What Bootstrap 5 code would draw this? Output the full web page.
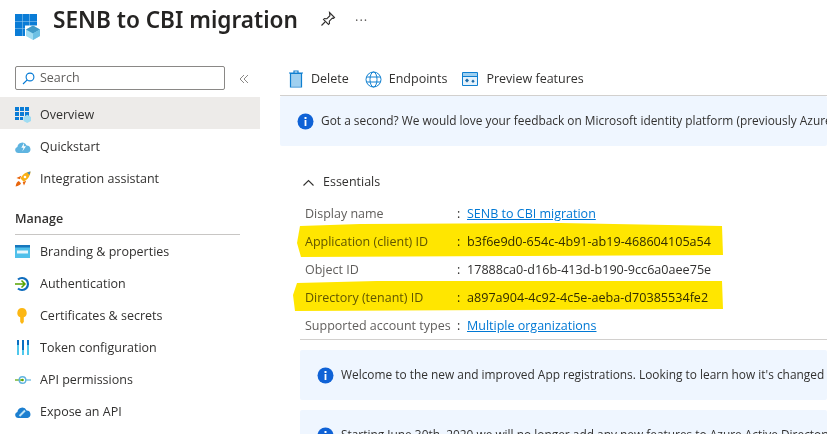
<!DOCTYPE html>
<html lang="en">
<head>
  <meta charset="UTF-8">
  <title>SENB to CBI migration</title>
  <link href="https://cdn.jsdelivr.net/npm/bootstrap@5.3.2/dist/css/bootstrap.min.css" rel="stylesheet">
  <style>
    html, body { height: 434px; overflow: hidden; }
    body { font-family: "Open Sans", "Noto Sans", sans-serif; font-size: 12.5px; color: #323130; background: #fff; }
    .page-head { height: 66px; padding-left: 15px; padding-top: 3px; }
    .page-title { font-family: "Noto Sans", sans-serif; font-size: 22.6px; font-weight: 600; color: #252423; margin: 0 0 0 13px; line-height: 34px; }
    .app-logo { margin-top: 11px; }
    .pin-btn { margin-left: 22px; }
    .more-dots { margin-left: 19px; font-size: 13px; line-height: 34px; color: #605e5c; letter-spacing: 1px; }
    .side-pane { width: 260px; flex: none; }
    .search-row { height: 31px; padding: 0 0 0 15px; }
    .search-box { width: 210px; height: 24px; border: 1px solid #8a8886; border-radius: 2px; color: #605e5c; padding-left: 6px; padding-top: 1px; gap: 5px; }
    .collapse-mark { margin-left: 14px; }
    .side-item { height: 32px; padding-left: 15px; gap: 9px; color: #323130; }
    .side-item.is-active { background: #edebe9; }
    .side-item svg { width: 16px; height: 16px; flex: none; }
    .side-top { padding-top: 4px; }
    .side-head { font-weight: 600; font-size: 12.5px; margin: 17px 20px 1px 15px; padding-bottom: 7px; border-bottom: 1px solid #c8c6c4; line-height: 17px; }
    .main-pane { margin-left: 20px; flex: 1; min-width: 0; overflow: hidden; }
    .tool-bar { height: 30px; border-bottom: 1px solid #d2d0ce; padding: 0 0 3px 8px; gap: 16px; }
    .tool-item { gap: 7px; }
    .tool-preview { margin-left: -1px; }
    .note-bar { height: 50px; background: #eff6ff; white-space: nowrap; gap: 7px; padding-left: 17px; overflow: hidden; border-radius: 2px; font-size: 11.9px; }
    .note-bar svg { flex: none; }
    .detail-wrap { margin-left: 20px; }
    .ess-head { margin: 26px 0 0 3px; height: 20px; gap: 9px; color: #323130; font-weight: 500; }
    .field-list { position: relative; margin-top: 8px; border-bottom: 1px solid #d2d0ce; height: 140px; padding-left: 5px; }
    .field-row { height: 28px; }
    .field-name { width: 152px; color: #605e5c; flex: none; }
    .field-colon { width: 6px; flex: none; margin-right: 4px; }
    .field-row a { color: #0078d4; }
    .field-guid { font-size: 12.6px; }
    .hi-mark { position: absolute; left: -8px; top: 0; width: 432px; height: 120px; mix-blend-mode: multiply; pointer-events: none; }
    .note-gap { margin-top: 10px; }
  </style>
</head>
<body>

<div class="page-head d-flex align-items-start">
  <svg class="app-logo" width="25" height="26" viewBox="0 0 25 26">
    <path fill="#a6d3f2" d="M0 0h22v22H0z"/>
    <path fill="#0a7cd6" d="M0 0h7v7H0zM7.500 0h7v7h-7zM15 0h7v7h-7zM0 7.500h7v7H0zM7.500 7.500h7v7h-7zM15 7.500h7v7h-7zM0 15h7v7H0zM7.500 15h7v7h-7z"/>
    <path fill="#fff" d="M10 11.500h15V26H10z"/>
    <path fill="#9fdcf2" d="M11 15.500l7-4 7 4v6.500l-7 4-7-4z"/>
    <path fill="#3f9ac8" d="M11 15.500l7-4 7 4-7 4z"/>
    <path fill="#6cc0e4" d="M18 19.500l7-4V22l-7 4z"/>
  </svg>
  <h1 class="page-title">SENB to CBI migration</h1>
  <svg class="pin-btn mt-2" width="16" height="16" viewBox="0 0 16 16" fill="none" stroke="#323130" stroke-width="1.100">
    <path d="M9.500 1.500l5 5-1 .8-1.200-.2-3 3 .2 2.400-1 1-5-5 1-1 2.400.2 3-3-.2-1.200zM5 11l-3.500 3.500"/>
  </svg>
  <span class="more-dots">···</span>
</div>

<div class="d-flex">
  <div class="side-pane">
    <div class="search-row d-flex align-items-start">
      <div class="search-box d-flex align-items-center">
        <svg width="13" height="13" viewBox="0 0 13 13" fill="none" stroke="#0078d4" stroke-width="1.100"><circle cx="8" cy="5" r="3.900"/><path d="M5.200 7.800L1 12"/></svg>
        <span>Search</span>
      </div>
      <svg class="collapse-mark mt-2" width="10" height="10" viewBox="0 0 10 10" fill="none" stroke="#8a8886"><path d="M5 1L1 5l4 4M9 1L5 5l4 4"/></svg>
    </div>

    <div class="side-item side-top is-active d-flex align-items-center">
      <svg viewBox="0 0 16 16"><path fill="#0a7cd6" d="M0 0h4v4H0zM5 0h4v4H5zM10 0h4v4h-4zM0 5h4v4H0zM5 5h4v4H5zM10 5h4v4h-4zM0 10h4v3H0zM5 10h3v3H5z"/><path fill="#9fdcf2" d="M8.500 10l3.700-2.200L16 10v4l-3.800 2-3.700-2z"/></svg>
      <span>Overview</span>
    </div>
    <div class="side-item side-top d-flex align-items-center">
      <svg viewBox="0 0 16 16"><path fill="#5fb4e0" d="M3 14a3 3 0 0 1-.6-5.900A4.800 4.800 0 0 1 11.600 6.500 3.800 3.800 0 0 1 12.500 14z"/><path fill="#fff" d="M9.300 3.500L6.300 8.800h2.200L7.300 12.500l3.700-5.200H8.700z"/></svg>
      <span>Quickstart</span>
    </div>
    <div class="side-item side-top d-flex align-items-center">
      <svg viewBox="0 0 16 16"><path fill="#f9b016" d="M15.500.5c-4.500.3-8 2.800-10 7l3.200 3.200c4-2.200 6.600-5.700 6.800-10.200z"/><path fill="#e8650c" d="M6.300 4.800L1.500 7l3.300 1.300zM11.200 9.800L9 14.600l-1.300-3.300zM3.800 10c-1.700.7-2.700 2.500-3.200 5.400 2.900-.5 4.700-1.500 5.400-3.200z"/><path fill="#3f8fc4" d="M15.500.5l-3.400 1 2.400 2.400z"/><circle cx="10" cy="6" r="1.300" fill="#fff"/></svg>
      <span>Integration assistant</span>
    </div>

    <div class="side-head">Manage</div>

    <div class="side-item d-flex align-items-center">
      <svg viewBox="0 0 16 16"><path fill="#50c0ea" d="M0 1h15v13H0z"/><path fill="#1777bd" d="M0 1h15v2.500H0z"/><path fill="#e8f7fd" d="M2 6.500h11v3H2z"/></svg>
      <span>Branding &amp; properties</span>
    </div>
    <div class="side-item d-flex align-items-center">
      <svg viewBox="0 0 16 16" fill="none"><path stroke="#0f6cbd" stroke-width="2.200" d="M3 3.500a6 6 0 1 1 0 9"/><path stroke="#57a300" stroke-width="1.500" d="M0 8h10M6.500 4.500L10 8l-3.500 3.500"/></svg>
      <span>Authentication</span>
    </div>
    <div class="side-item d-flex align-items-center">
      <svg viewBox="0 0 16 16"><path fill="#fcb714" d="M7 0a4.800 4.800 0 0 1 1.800 9.200V14L7 16l-1.800-2V9.200A4.800 4.800 0 0 1 7 0z"/></svg>
      <span>Certificates &amp; secrets</span>
    </div>
    <div class="side-item d-flex align-items-center">
      <svg viewBox="0 0 16 16"><path fill="#0a6fc2" d="M2 0h2v5H2zM7 0h2v10H7zM12 0h2v5h-2z"/><path fill="#50c8ec" d="M2 5h2v10H2zM7 10h2v5H7zM12 5h2v10h-2z"/></svg>
      <span>Token configuration</span>
    </div>
    <div class="side-item d-flex align-items-center">
      <svg viewBox="0 0 16 16" fill="none"><path stroke="#57a300" stroke-width="1.200" d="M0 8h8"/><path stroke="#5fb4e0" stroke-width="1.200" d="M11 8h5"/><circle cx="7.500" cy="8" r="3.300" stroke="#5fb4e0" stroke-width="1.400"/><circle cx="7.500" cy="8" r="1.300" fill="#57a300"/></svg>
      <span>API permissions</span>
    </div>
    <div class="side-item d-flex align-items-center">
      <svg viewBox="0 0 16 16"><path fill="#1c7fd0" d="M3 14a3 3 0 0 1-.6-5.900A4.800 4.800 0 0 1 11.600 6.500 3.800 3.800 0 0 1 12.500 14z"/><path stroke="#bfe3f5" stroke-width="2" fill="none" d="M4.500 12l5.500-5.500"/></svg>
      <span>Expose an API</span>
    </div>
  </div>

  <div class="main-pane">
    <div class="tool-bar d-flex align-items-center">
      <div class="tool-item d-flex align-items-center">
        <svg width="16" height="18" viewBox="0 0 16 18"><path fill="#9fd0f0" d="M3 3.500h10V16H3z"/><path fill="none" stroke="#0f7fd0" stroke-width="1.200" d="M2.500 3.500h11V17h-11zM1 3h14M6 3V1h4v2"/></svg>
        <span>Delete</span>
      </div>
      <div class="tool-item d-flex align-items-center">
        <svg width="17" height="17" viewBox="0 0 17 17" fill="none" stroke="#0f7fd0" stroke-width="1"><circle cx="8.500" cy="8.500" r="7.500"/><ellipse cx="8.500" cy="8.500" rx="3.500" ry="7.500"/><path d="M1.500 6h14M1.500 11h14"/></svg>
        <span>Endpoints</span>
      </div>
      <div class="tool-item tool-preview d-flex align-items-center">
        <svg width="17" height="15" viewBox="0 0 17 15"><path fill="#e6f2fb" stroke="#0f7fd0" d="M.5.500h15v13H.5z"/><path fill="#9fd0f0" d="M1 1h14v3H1z"/><path fill="#0f7fd0" d="M1 4h14v1H1z"/><path fill="#1b6aa8" d="M5 6.500l2 2-2 2-2-2zM11 7.500l1.700 1.700L11 11 9.300 9.200z"/></svg>
        <span>Preview features</span>
      </div>
    </div>

    <div class="note-bar d-flex align-items-center">
      <svg width="17" height="17" viewBox="0 0 17 17"><circle cx="8.500" cy="8.500" r="8" fill="#0f62d6"/><path fill="#fff" d="M7.600 7h1.800v6H7.600zM7.500 4h2v1.900h-2z"/></svg>
      <span>Got a second? We would love your feedback on Microsoft identity platform (previously Azure AD for developer).</span>
    </div>

    <div class="detail-wrap">
      <div class="ess-head d-flex align-items-center">
        <svg width="11" height="7" viewBox="0 0 11 7" fill="none" stroke="#323130" stroke-width="1.100"><path d="M.5 6.500l5-5 5 5"/></svg>
        <span>Essentials</span>
      </div>

      <div class="field-list">
        <div class="field-row d-flex align-items-center"><span class="field-name">Display name</span><span class="field-colon">:</span><a href="#">SENB to CBI migration</a></div>
        <div class="field-row d-flex align-items-center"><span class="field-name">Application (client) ID</span><span class="field-colon">:</span><span class="field-guid">b3f6e9d0-654c-4b91-ab19-468604105a54</span></div>
        <div class="field-row d-flex align-items-center"><span class="field-name">Object ID</span><span class="field-colon">:</span><span class="field-guid">17888ca0-d16b-413d-b190-9cc6a0aee75e</span></div>
        <div class="field-row d-flex align-items-center"><span class="field-name">Directory (tenant) ID</span><span class="field-colon">:</span><span class="field-guid">a897a904-4c92-4c5e-aeba-d70385534fe2</span></div>
        <div class="field-row d-flex align-items-center"><span class="field-name">Supported account types</span><span class="field-colon">:</span><a href="#">Multiple organizations</a></div>
        <svg class="hi-mark" viewBox="0 0 432 120">
          <path fill="#ffe600" d="M8 26l60-2 200-1 162 3 1 29-200 1-222 1-4-14z"/>
          <path fill="#ffe600" d="M5 83l80-2 200 0 145 0 1 28-220 1-208 1-2-16z"/>
        </svg>
      </div>

      <div class="note-bar note-gap d-flex align-items-center">
        <svg width="17" height="17" viewBox="0 0 17 17"><circle cx="8.500" cy="8.500" r="8" fill="#0f62d6"/><path fill="#fff" d="M7.600 7h1.800v6H7.600zM7.500 4h2v1.900h-2z"/></svg>
        <span>Welcome to the new and improved App registrations. Looking to learn how it's changed from App registrations (Legacy)?</span>
      </div>
      <div class="note-bar note-gap d-flex align-items-center">
        <svg width="17" height="17" viewBox="0 0 17 17"><circle cx="8.500" cy="8.500" r="8" fill="#0f62d6"/><path fill="#fff" d="M7.600 7h1.800v6H7.600zM7.500 4h2v1.900h-2z"/></svg>
        <span>Starting June 30th, 2020 we will no longer add any new features to Azure Active Directory Authentication Library.</span>
      </div>
    </div>
  </div>
</div>

</body>
</html>
